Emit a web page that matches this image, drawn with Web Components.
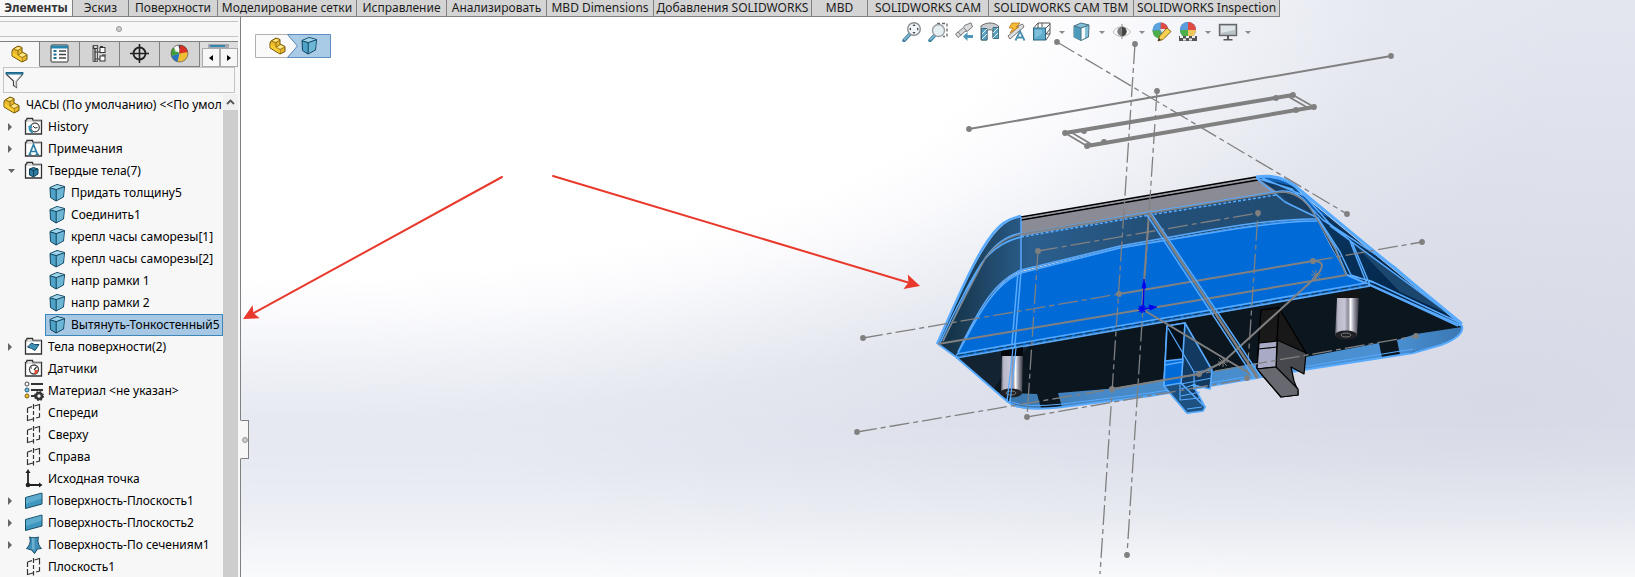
<!DOCTYPE html>
<html lang="ru">
<head>
<meta charset="utf-8">
<title>SOLIDWORKS</title>
<style>
html,body{height:100%;margin:0}
body{font:12px/16px "Noto Sans","Open Sans",sans-serif;color:#000;background:#fff;overflow:hidden}
</style>
</head>
<body>
<cad-app></cad-app>
<script>
const ICONS = {
part:`<path d="M3 5 8 2l4 1.500v4.500l5 2.500v5L12 18 2 12V7z" fill="#e9b92b" stroke="#6e5309"/><path d="M4 5.500 8 3l3.500 1L8 6z M8.500 11 12 9l4.500 2-4 2.500z" fill="#ffe886"/><path d="M8 6.500v5l4 2V18M8 6.500 4 5.500M8 6.500 12 4M8 11.500l4-3M12 13.500l5-2.500" fill="none" stroke="#7a5c0c" stroke-width=".8"/><path d="M2.500 8 8 11.500 12 14v3.500L2.500 11.800z" fill="#ffd534" opacity=".7"/>`,
cube:`<path d="M2 4.500 9 1.500l7.500 2L15.500 14 8 18 2.500 14.500z" fill="#4fa3c9" stroke="#11435c"/><path d="M2.500 4.800 9 2l7 1.800L8.200 6.500z" fill="#9fd3ea"/><path d="M8.200 6.800 16 4l-1 9.700L8.200 17.300z" fill="#6db6d6"/><path d="M2 4.800 8.200 6.600 16.500 3.700M8.200 6.600V18" fill="none" stroke="#11435c"/>`,
folder:`<path d="M1.500 17V3.500h1l.5-2h5.500l.5 2h8.500V17z" fill="#fff" stroke="#333" stroke-width="1.300"/><path d="M2 4h15" stroke="#bbb"/>`,
bars:`<rect x="1" y="1" width="17" height="17" rx="1" fill="#fff" stroke="#333"/><path d="M1 3h17" stroke="#2684ad" stroke-width="3"/><path d="M3.500 7h3M3.500 10.500h3M3.500 14h3" stroke="#1d6d92" stroke-width="2"/><path d="M9 7h7M9 10.500h7M9 14h7" stroke="#444" stroke-width="1.400"/>`,
config:`<path d="M3.500 1.500h4v3h-4zM5 5v12M5 8h5M5 15h5" fill="none" stroke="#333" stroke-width="1.200"/><path d="M3 1.500h4.500v16H3z" fill="none" stroke="#555"/><rect x="10" y="3.500" width="5" height="5" fill="#fff" stroke="#333"/><rect x="10" y="12" width="5" height="5" fill="#fff" stroke="#333"/><path d="M10 2.500h3M12 11h4" stroke="#333"/>`,
target:`<circle cx="9.500" cy="9.500" r="6" fill="none" stroke="#222" stroke-width="1.800"/><path d="M9.500 0v19M0 9.500h19" stroke="#222" stroke-width="1.600"/>`,
ball:`<circle cx="9.500" cy="9.500" r="8.500" fill="#eebd35"/><path d="M9.500 9.500 5 2.300A8.500 8.500 0 0 1 17 5.500z" fill="#3c3c3c"/><path d="M9.500 9.500 3.500 3.500a8.500 8.500 0 0 1 5-2.500z" fill="#fff"/><path d="M9.500 9.500 10 1a8.500 8.500 0 0 1 8 7z" fill="#dc2e25"/><path d="M9.500 9.500 3.500 3.500A8.500 8.500 0 0 0 1.500 12z" fill="#3e9e3c"/><path d="M9.500 9.500 1.500 12a8.500 8.500 0 0 0 6 5.800z" fill="#2774c5"/><circle cx="7" cy="5.500" r="2.500" fill="#fff" opacity=".7"/><circle cx="9.500" cy="9.500" r="8.500" fill="none" stroke="#555" stroke-width=".7"/>`,
funnel:`<path d="M1.500 2.500h16v2l-6 6.500v6.500l-3-2V11l-7-6.500z" fill="#fff" stroke="#444" stroke-width="1.200"/><path d="M1 2.500h17v1.500H1z" fill="#3e9ac0" stroke="#1b6485"/><path d="M10 11v5l1.500 1.500V11l6-6.500z" fill="#ccc"/>`,
plane:`<path d="M3.500 5 8 3.700M10.500 3l5-1.500v6M15.500 10v4l-3.500 1M9 16l-5.500 1.500V12M3.500 10V5" fill="none" stroke="#333" stroke-width="1.200"/><path d="M9.500 1v5M9.500 8v4M9.500 14v4.500" stroke="#333" stroke-width="1.200"/>`,
origin:`<path d="M4 2v14h13" fill="none" stroke="#222" stroke-width="1.800"/><path d="M4 0 1.500 4h5zM18.500 16 15 13.500v5z" fill="#222"/><circle cx="4" cy="16" r="2.300" fill="#222"/>`,
surf:`<path d="M1.500 6.500 18 2v11L1.500 17.500z" fill="#3f97c0" stroke="#174c66"/><path d="M2 7 17.500 2.500v5L2 13z" fill="#6bb5d4" opacity=".7"/>`,
loft:`<path d="M5.500 2c3 1 6 1 9 0-1 4-.5 8 3 11.500L13.500 14l-3 4.500L7.500 15 2.500 13.500C6 10 7 6 5.500 2z" fill="#3f8fb8" stroke="#174c66"/><path d="M8 3h2.500V15L8 14z" fill="#8cc6df" opacity=".6"/>`,
material:`<path d="M7 3h12M7 9h12M7 15h5" stroke="#333" stroke-width="1.800"/><circle cx="3" cy="3" r="2" fill="#fff" stroke="#444"/><circle cx="3" cy="9" r="2" fill="#6cc0e6" stroke="#275c77"/><circle cx="3" cy="15" r="2" fill="#f5c32a" stroke="#7a5c0c"/><circle cx="15" cy="15" r="3" fill="none" stroke="#333" stroke-width="2.600"/><circle cx="15" cy="15" r="4.300" fill="none" stroke="#333" stroke-width="1.400" stroke-dasharray="1.700 1.700"/>`,
zoomfit:`<path d="M8 12 2 18.500" stroke="#3f7f9f" stroke-width="3.500" stroke-linecap="round"/><path d="M8 12 2 18" stroke="#8cc4dc" stroke-width="1.500"/><circle cx="12" cy="7" r="6.300" fill="#f2f6f8" stroke="#8a8f93" stroke-width="1.400"/><path d="m12 2 1.500 2h-3zM12 12l1.500-2h-3zM7 7l2-1.500v3zM17 7l-2-1.500v3z" fill="#444"/>`,
zoomarea:`<path d="M9 1.500h10v13h-4" fill="none" stroke="#666" stroke-width="1.300" stroke-dasharray="3 2"/><path d="M7 13 2 18.500" stroke="#3f7f9f" stroke-width="3.500" stroke-linecap="round"/><path d="M7 13 2 18" stroke="#8cc4dc" stroke-width="1.500"/><circle cx="10.500" cy="8.500" r="6" fill="#e4eef3" stroke="#9a9fa3" stroke-width="1.400"/>`,
prev:`<path d="m1.500 12 8-6.500 1-2L17 .8 18.500 5l-5 4-2.500.5-7 6z" fill="#d9dadb" stroke="#77797b"/><path d="m10 6 3 3.500M4 10l3 3.500" stroke="#77797b"/><path d="M9 14.500 13.500 10v3H19v3h-5.500v3z" fill="#4f97b8"/>`,
section:`<path d="M1 4C6 0 14 0 18.500 4v12h-5.500V8.500C11.500 7.500 8.500 7.500 7 8.500V18H1z" fill="#c9cdd0" stroke="#666"/><path d="M1.500 6.500H7V18H1.500zM13 5.500h5.500v11H13z" fill="#5ca2c2" stroke="#3e6c82"/><path d="m2 12 5-5M2 17l5-5M13 11l5-5M13 16l5-5" stroke="#e8f6fb"/>`,
dynamic:`<path d="m2 14 8-7 2-3 4.500-2L18 5l-6 5-8 7z" fill="#ddd" stroke="#777"/><path d="M6 1h8L10 5h3l-9 6 3-5H3z" fill="#f7bc36" stroke="#b97a16" stroke-width=".8"/><path d="M9.500 18.500 14 9l4.500 9.500M11 15.500h6" fill="none" stroke="#4b8fb0" stroke-width="1.800"/>`,
orient:`<path d="m2 5.500 4-4.500h12v11l-4 6M6 1v11h12M10 5V1M14 6l4-4M14 12l4-5" fill="none" stroke="#555"/><rect x="1.500" y="6" width="12" height="12" fill="#5faccd" stroke="#2d627b"/><path d="M3 8h7v4L3 16z" fill="#93cbe2" opacity=".6"/>`,
display:`<path d="m2 4 7-3 8 2-.5 12L9 18.500 2 15z" fill="#82bfd9" stroke="#49707f"/><path d="m2 4 7 2v12L2 15z" fill="#4d9bbd"/><path d="m9 6 4-1v11l-4 2z" fill="#f5fafc"/><path d="m2 4 7 2 8-3M9 6v12" fill="none" stroke="#49707f"/>`,
eye:`<path d="M1 10C5 3 14 3 18.500 10 14 16 5 16 1 10z" fill="#fafafa" stroke="#bbb"/><circle cx="10" cy="9.500" r="4.700" fill="#7b7b7b"/><path d="M10 2v15" stroke="#888"/><circle cx="11.500" cy="8" r="1.800" fill="#eee"/><path d="M10 5a4.500 4.500 0 0 1 0 9z" fill="#444"/>`,
apper:`<circle cx="8.500" cy="8.500" r="8" fill="#4589d2"/><path d="M8.500 8.500V.5a8 8 0 0 1 8 8z" fill="#df4a43"/><path d="M8.500 8.500H.5A8 8 0 0 1 8.500.5z" fill="#5ba3dc"/><path d="M8.500 8.500H.5a8 8 0 0 0 8 8z" fill="#4eae4a"/><path d="M8 7h6l-3 6z" fill="#d8e8ee"/><path d="m6 19 1.500-5L15 6l4 3.500-8 8z" fill="#f7cf52" stroke="#85651a"/><path d="m6 19 1-3 2 2z" fill="#333"/>`,
scene:`<circle cx="10" cy="8" r="8" fill="#4589d2"/><path d="M10 8V0a8 8 0 0 1 8 8z" fill="#df4a43"/><path d="M10 8h8a8 8 0 0 1-8 8z" fill="#f1c65a"/><path d="M10 8v8a8 8 0 0 1-8-8z" fill="#4eae4a"/><path d="M10 8H2a8 8 0 0 1 8-8z" fill="#5b9cdc"/><path d="M1 14h18v5H1z" fill="#555"/><path d="M2 14h3v2H2zM8 14h3v2H8zM14 14h3v2h-3zM5 16.500h3v2H5zM11 16.500h3v2h-3z" fill="#eee"/>`,
monitor:`<rect x="1.500" y="2.500" width="17" height="11" fill="#b9c2c9" stroke="#666" stroke-width="1.400"/><path d="M3 4h14v4L3 11z" fill="#dfe5e9"/><path d="M9 14h2v3h3.500v1.500h-9V17H9z" fill="#555"/>`
};
ICONS.history = ICONS.folder+`<circle cx="11" cy="10.500" r="4.300" fill="#fff" stroke="#444" stroke-width="1.200"/><path d="M9 9l2 2 2.500-.5" fill="none" stroke="#333"/><path d="M9 15.500c-3-.5-4-3-3-6" fill="none" stroke="#3491bb" stroke-width="2"/><path d="m3.500 10 3.500-2.500L8.500 11z" fill="#3491bb"/>`;
ICONS.notes = ICONS.folder+`<path d="m5.500 15.500 4-10 4 10M7 12.500h5M4.500 15.500h3M11.500 15.500h3.500" fill="none" stroke="#2e7fa4" stroke-width="1.700"/>`;
ICONS.solids = ICONS.folder+`<path d="m5.500 8 4-1.500L14 8v5l-4.500 3-4-2z" fill="#2c7da3" stroke="#123f55"/><path d="m5.500 8 4 1.500L14 8M9.500 9.500V15" stroke="#123f55" fill="none"/>`;
ICONS.surfaces = ICONS.folder+`<path d="m3.500 10 4-4 3 1.500L15 7.500l-4 6-3.500-2z" fill="#3f8fb8" stroke="#174c66"/>`;
ICONS.sensors = ICONS.folder+`<circle cx="10" cy="10.500" r="4.500" fill="#fff" stroke="#444" stroke-width="1.300"/><path d="m10 11 2.500-3M7 9h1" stroke="#333" stroke-width="1.200"/><path d="M10 15a4 4 0 0 0 4-4h-3z" fill="#e04b2d"/>`;

const define = (name, html) => customElements.define(name, class extends HTMLElement {
  connectedCallback() {
    if (this.shadowRoot) return;
    const t = document.createElement('template');
    t.innerHTML = typeof html === 'function' ? html(this) : html;
    this.attachShadow({mode:'open'}).append(t.content);
  }
});
const BTN = `button{all:unset;box-sizing:border-box;cursor:default}`;

define('cad-icon', el => `<style>:host{display:block;width:20px;height:20px;flex:none}svg{display:block;width:100%;height:100%}</style>
<svg viewBox="0 0 20 20" aria-hidden="true">${ICONS[el.getAttribute('name')]}</svg>`);

define('command-tab', el => `<style>
:host{display:block;box-sizing:border-box;height:17px;border-right:1px solid #808080;border-bottom:1px solid #808080;background:#d4d4d4;color:#1c1c1c}
:host([selected]){background:#f7f7f7;font-weight:bold;color:#333}
${BTN}button{display:block;width:100%;height:16px;line-height:10px;text-align:center;white-space:nowrap}
</style><button role="tab" type="button"><slot></slot></button>`);

define('command-tabs', `<style>
:host{display:flex;width:max-content}
command-tab{width:var(--w)}
</style>` + [['Элементы',73],['Эскиз',56],['Поверхности',89],['Моделирование сетки',139],['Исправление',90],['Анализировать',100],['MBD Dimensions',107],['Добавления SOLIDWORKS',158],['MBD',56],['SOLIDWORKS CAM',121],['SOLIDWORKS CAM TBM',145],['SOLIDWORKS Inspection',146]]
 .map(([t,w],i)=>`<command-tab style="--w:${w}px" ${i?'':'selected'}>${t}</command-tab>`).join(''));

define('tree-row', el => {
  const open = el.getAttribute('arrow');
  const lvl = el.getAttribute('level');
  return `<style>
:host{display:block;height:22px}
div{display:flex;align-items:center;height:22px;padding-left:${lvl==='0'?2:lvl==='1'?8:45}px;white-space:nowrap}
.arrow{width:16px;height:12px;flex:none}
.arrow svg{display:block}
.label{display:flex;align-items:center;box-sizing:border-box;height:22px;padding:0 2px;border:1px solid transparent;gap:3px}
:host(:not([level="2"])) .label{padding-left:0;border:0;gap:4px}
:host([selected]) .label{background:#a6c8e4;border-color:#3c86b8}
</style><div>${lvl==='1'?`<span class="arrow">${open==='open'?'<svg width="8" height="12"><path d="M0 4h7L3.500 8z" fill="#666"/></svg>':open?'<svg width="8" height="12"><path d="M0 2v8l4-4z" fill="#666"/></svg>':''}</span>`:''}
<span class="label"><cad-icon name="${el.getAttribute('icon')}"></cad-icon><slot></slot></span></div>`;
});

const ROWS = [[0,'part','ЧАСЫ (По умолчанию) &lt;&lt;По умол'],[1,'history','History','closed'],[1,'notes','Примечания','closed'],[1,'solids','Твердые тела(7)','open'],
[2,'cube','Придать толщину5'],[2,'cube','Соединить1'],[2,'cube','крепл часы саморезы[1]'],[2,'cube','крепл часы саморезы[2]'],[2,'cube','напр рамки 1'],[2,'cube','напр рамки 2'],[2,'cube','Вытянуть-Тонкостенный5','',1],
[1,'surfaces','Тела поверхности(2)','closed'],[1,'sensors','Датчики'],[1,'material','Материал &lt;не указан&gt;'],[1,'plane','Спереди'],[1,'plane','Сверху'],[1,'plane','Справа'],[1,'origin','Исходная точка'],[1,'surf','Поверхность-Плоскость1','closed'],[1,'surf','Поверхность-Плоскость2','closed'],[1,'loft','Поверхность-По сечениям1','closed'],[1,'plane','Плоскость1']];

define('feature-tree', `<style>
:host{display:grid;grid-template-columns:1fr 15px;min-height:0;overflow:hidden}
.rows{overflow:hidden;min-width:0}
.scroll{background:#cdcdcd;display:flex;flex-direction:column}
${BTN}button{height:16px;background:#f0f0f0;display:grid;place-items:center}
</style><div class="rows" role="tree">${ROWS.map(([l,i,t,a,s])=>`<tree-row role="treeitem" level="${l}" icon="${i}" ${a?`arrow="${a}"`:''} ${s?'selected':''}>${t}</tree-row>`).join('')}</div>
<div class="scroll"><button type="button" aria-label="Прокрутить вверх"><svg width="9" height="6"><path d="m1 5 3.500-3.500L8 5" fill="none" stroke="#555" stroke-width="1.800"/></svg></button></div>`);

define('feature-panel', `<style>
:host{display:grid;grid-template-rows:auto auto auto 1fr;box-sizing:border-box;width:241px;background:#f7f7f7;border-right:1px solid #808080;padding-right:2px;min-height:0}
.grip{height:14px;margin-top:4px;border:1px solid #c4c4c4;border-width:1px 0;display:grid;place-items:center;box-sizing:content-box}
.grip i{width:4px;height:4px;border:1px solid #999;border-radius:50%;background:#ccc}
.tabs{display:flex;margin-top:4px;height:26px;box-sizing:border-box;border-top:1px solid #808080;background:#d4d4d4;overflow:hidden}
${BTN}
.tabs>button{width:40px;display:grid;place-items:center;border-right:1px solid #808080;border-bottom:1px solid #808080}
.tabs>button.on{background:#f7f7f7;border-bottom-color:#f7f7f7}
.nav{flex:1;display:flex;align-items:flex-end;padding-left:2px;background:linear-gradient(90deg,transparent 10px,#3187ad 10px 25px,transparent 25px) 0 3px/100% 2px no-repeat,linear-gradient(90deg,transparent 8px,#a8a8b0 8px 29px,transparent 29px) 0 2px/100% 4px no-repeat,#ddd}
.nav button{flex:1;height:19px;border:1px solid #aaa;background:#f7f7f7;display:grid;place-items:center}
label{display:flex;align-items:center;margin:0 3px 1px;height:26px;box-sizing:border-box;border:1px solid #c4c4c4;padding-left:1px}
input{flex:1;min-width:0;border:0;outline:0;background:transparent;font:inherit;height:20px;padding:0 4px}
</style>
<div class="grip"><i></i></div>
<div class="tabs">${['part','bars','config','target','ball'].map((n,i)=>`<button type="button" class="${i?'':'on'}" aria-label="${['Дерево конструирования','Свойства','Конфигурации','Размеры','Отображение'][i]}"><cad-icon name="${n}"></cad-icon></button>`).join('')}
<div class="nav"><button type="button" aria-label="Назад"><svg width="4" height="6"><path d="M4 0v6L0 3z"/></svg></button><button type="button" aria-label="Вперед"><svg width="4" height="6"><path d="M0 0v6l4-3z"/></svg></button></div></div>
<label><cad-icon name="funnel"></cad-icon><input type="text" aria-label="Фильтр"></label>
<feature-tree></feature-tree>`);

define('panel-handle', `<style>
:host{display:block}${BTN}
button{width:9px;height:39px;border:1px solid #808080;border-left-color:#f7f7f7;background:#f7f7f7;display:grid;place-items:center}
i{width:4px;height:4px;border:1px solid #999;border-radius:50%;background:#ccc}
</style><button type="button" aria-label="Скрыть панель"><i></i></button>`);

define('model-breadcrumb', `<style>
:host{display:block;width:76px;height:24px}
nav{display:grid;height:24px}
svg,span{grid-area:1/1}
span{display:flex;align-items:center;gap:12px;padding-left:13px}
a{display:block}
</style><nav><svg width="76" height="24"><path d="M.5.500h32l10 11.500-10 11.500H.5z" fill="#fafafa" stroke="#b0b0b0"/><path d="M32.500.5h43v23h-43l10-11.500z" fill="#a9cbe6" stroke="#5c8fc0"/></svg>
<span><a href="#part" aria-label="Деталь"><cad-icon name="part"></cad-icon></a><a href="#body" aria-label="Твердое тело"><cad-icon name="cube"></cad-icon></a></span></nav>`);

define('view-toolbar', `<style>
:host{display:flex;gap:6px;align-items:center;height:20px}
${BTN}button{width:20px;height:20px}
.drop{width:8px;display:grid;place-items:center}
</style>` + [['zoomfit','Во весь экран'],['zoomarea','Увеличить область'],['prev','Предыдущий вид'],['section','Разрез'],['dynamic','Примечания'],['orient','Ориентация',1],['display','Стиль отображения',1],['eye','Скрыть',1],['apper','Внешний вид'],['scene','Сцена',1],['monitor','Настройки вида',1]]
.map(([n,t,d])=>`<button type="button" aria-label="${t}"><cad-icon name="${n}"></cad-icon></button>${d?`<button type="button" class="drop" aria-label="${t}: меню"><svg width="6" height="3"><path d="M0 0h6L3 3z" fill="#8a8a8a"/></svg></button>`:''}`).join(''));

const dots = pts => pts.map(([x,y])=>`<circle cx="${x}" cy="${y}" r="2.900"/>`).join('');
const star = (x,y,r=5) => `<path d="M${x-r} ${y}h${2*r}M${x} ${y-r}v${2*r}M${x-r+1} ${y-r+1}l${2*r-2} ${2*r-2}M${x+r-1} ${y-r+1}l${2-2*r} ${2*r-2}"/>`;
const arrow = (x1,y1,x2,y2) => {
  const a=Math.atan2(y2-y1,x2-x1)*180/Math.PI;
  return `<path d="M${x1} ${y1}L${x2-8*Math.cos(a*Math.PI/180)} ${y2-8*Math.sin(a*Math.PI/180)}" stroke="#e8392c" stroke-width="2" stroke-linecap="round"/><path d="M0 0-15-7.500-12 0-15 7.500z" fill="#e8392c" transform="translate(${x2} ${y2}) rotate(${a})"/>`;
};
const BOTTOM='L1462 326C1464 333 1455 340 1441 345L1413 353 1303 370 1210 386 1150 396 1063 407Q1020 412 1008 402';
define('model-view', `<style>:host{display:block;min-height:0;min-width:0}svg{display:block;width:100%;height:100%}</style>
<svg viewBox="0 0 1635 577" role="img" aria-label="Модель корпуса часов">
<defs>
<linearGradient id="steel" x1="950" x2="1320" y1="0" y2="0" gradientUnits="userSpaceOnUse"><stop offset="0" stop-color="#163449"/><stop offset=".22" stop-color="#2b5f8e"/><stop offset=".5" stop-color="#24517a"/><stop offset="1" stop-color="#214b70"/></linearGradient>
<linearGradient id="side" x1="1330" x2="1420" y1="210" y2="310" gradientUnits="userSpaceOnUse"><stop offset="0" stop-color="#0a365f"/><stop offset="1" stop-color="#032448"/></linearGradient>
<linearGradient id="cyl"><stop offset="0" stop-color="#55565f"/><stop offset=".12" stop-color="#b8b8c8"/><stop offset=".4" stop-color="#c5c5d6"/><stop offset=".55" stop-color="#8a8a98"/><stop offset=".65" stop-color="#fff"/><stop offset=".78" stop-color="#a0a0ae"/><stop offset="1" stop-color="#33343a"/></linearGradient>
<linearGradient id="rim" x1="1010" x2="1460" y1="0" y2="0" gradientUnits="userSpaceOnUse"><stop offset="0" stop-color="#3b76ad"/><stop offset=".2" stop-color="#4789c6"/><stop offset=".85" stop-color="#4b91d3"/><stop offset="1" stop-color="#3a78b3"/></linearGradient>
</defs>
<path d="M1021 217 1256 177 1281 191 1021 236z" fill="#8b8b95"/>
<path d="M1021 217 1256 177M1021 220 1258 180" stroke="#000" stroke-width="1.600"/><path d="M1021 218.500 1257 178.500" stroke="#9c9caa"/>
<path d="M956 357 1370 285${BOTTOM}z" fill="#0b161f"/>
<path d="M956 357 994 389 1001 378 1030 345z" fill="#142331"/>
<path d="M1008 402 1013 393 1037 394 1041 408Q1015 411 1008 402z" fill="url(#rim)"/>
<path d="M1058 393 1107 389 1160 381 1257 363 1306 357 1379 343 1382 358 1303 370 1210 386 1150 396 1062 407z" fill="url(#rim)"/>
<path d="M1397 340 1416 334 1462 327C1464 333 1455 340 1441 345L1400 355z" fill="url(#rim)"/>
<path d="M938 344C955 306 968 274 984 249S1008 220 1021 217V236L1281 191C1300 192 1308 208 1317 220Q1280 219 1210 232L1120 247 1021 271C997 281 982 307 956 357z" fill="url(#steel)"/>
<path d="M956 357C982 307 997 281 1021 272L1120 247 1210 232Q1280 219 1317 220L1330 245 1347 275 1370 285z" fill="#006bd6"/>
<path d="M1256 177C1275 174 1290 181 1301 194L1462 326 1370 285 1347 275 1317 220z" fill="url(#side)"/>
<path d="M1256 177C1275 174 1290 180 1301 194L1330 218 1316 212 1292 186z" fill="#0f63b8"/>
<path d="M1270 184 1292 190 1315 216 1290 204z" fill="#193e60"/>
<path d="M1352 242 1415 289 1452 316 1400 292z" fill="#1b466e"/>
<g fill="none" stroke="#58aaff" stroke-width="1.500" stroke-linejoin="round">
<path d="M937 344C955 305 967 274 983 248S1008 219 1021 216" stroke-width="2.500"/>
<path d="M943 341C960 306 970 283 986 257Q1001 236 1022 233M939 345C956 307 975 272 984 260Q1000 241 1022 237"/>
<path d="M1021 217V272L1010 403M1018 272 1007 402"/>
<path d="M956 357C982 307 996 283 1021 273L1120 248 1210 233Q1280 221 1317 221M958 352C982 302 996 281 1021 270L1120 246 1210 230Q1280 218 1317 219"/>
<path d="M1021 234 1150 212 1281 191Q1300 190 1312 210L1335 247 1347 275"/>
<path d="M1021 237 1150 215 1276 195" stroke-dasharray="3 2"/>
<path d="M938 344 956 357 1008 402Q1020 412 1063 407L1150 396 1210 386 1303 370 1413 353 1441 345C1455 340 1464 333 1462 326L1370 285 1347 275" stroke-width="2"/>
<path d="M1012 402Q1025 408 1063 404L1150 393 1210 383 1303 367 1413 349" stroke-width="1"/>
<path d="M956 358 1370 286M957 354 1366 283" stroke-width="1.700"/>
<path d="M1256 177C1275 174 1290 180 1301 191L1462 324" stroke-width="3"/>
<path d="M1256 178 1292 189 1323 220 1395 267 1458 322 1371 281 1347 275M1256 178 1285 202 1318 218 1340 252 1351 275 1375 283M1262 178 1305 196 1329 223 1352 242 1440 307M1330 226 1352 242 1370 285M1350 241 1367 284M1370 285 1458 326" />
</g>
<path d="M957 355.500 1368 284.500" stroke="#163956" stroke-width="1" stroke-dasharray="7 3"/>
<g>
<path d="M1001 351 1023 347V357H1001z" fill="#05080b"/><path d="M1002 356h21l-1 37h-21z" fill="url(#cyl)"/><ellipse cx="1011" cy="393" rx="11" ry="4.500" fill="#202126"/><ellipse cx="1011" cy="393" rx="5" ry="2" fill="none" stroke="#777"/>
<path d="M1337 294 1359 290V299H1337z" fill="#151515"/><path d="M1337 298h22l-2 38h-22z" fill="url(#cyl)"/><ellipse cx="1346" cy="335" rx="11" ry="4.500" fill="#202126"/><ellipse cx="1346" cy="335" rx="5" ry="2" fill="none" stroke="#777"/>
<path d="M1016 348 1010 403M1013 348 1007 402" stroke="#58aaff" stroke-width="1.200" fill="none"/>
</g>
<g stroke="#000" stroke-width="1.200" stroke-linejoin="round">
<path d="M1261 310 1279 308 1306 353 1304 374 1291 367 1294 381 1298 391V395L1281 397 1257 369z" fill="#47484e"/>
<path d="M1261 310 1279 308 1276 367 1257 369z" fill="#191919"/><path d="M1279 308 1306 353 1277 340z" fill="#181818"/>
<path d="M1259 343 1277 341 1276 367 1257 369z" fill="#a8aac6"/><path d="M1258 349 1277 347"/>
<path d="M1257 369 1276 367 1298 389V395L1281 397z" fill="#686970"/>
</g>
<g stroke="#58aaff" stroke-width="1.600" stroke-linejoin="round">
<path d="M1167 326 1185 323 1212 370 1210 389 1193 385 1205 407 1203 411 1187 413 1164 386z" fill="#123a60"/>
<path d="M1167 326 1185 323 1181 384 1164 386z" fill="#04101b"/><path d="M1165 361 1183 359 1181 384 1164 386z" fill="#006bd6"/><path d="M1165 365 1182 362"/>
<path d="M1164 386 1181 383 1205 407 1203 411 1187 413z" fill="#1d5180"/><path d="M1168 328 1194 372V390M1194 372 1212 370M1181 384 1212 378M1181 396 1200 392M1180 384V400L1200 398M1187 409 1202 407M1181 389 1196 384" fill="none" stroke-width="1.200"/>
</g>
<g fill="none" stroke="#808080" stroke-width="1.300" stroke-dasharray="20 4 5 4">
<path d="M1057 42 1347 214M1135 44 1100 574M1157 91 1127 555M863 338 1119 294M1313 261 1422 242M857 432 1112 389 1416 336M1038 251 1258 213 1247 378M1038 251 1027 417 1247 379"/>
</g>
<g fill="none" stroke="#808080" stroke-width="2">
<path d="M969 129 1391 56M1119 294 1313 261Q1326 261 1320 271L1316 277 1223 362 1213 367 1199 374 1112 389M938 344 1347 275M1149 213 1142 309 1257 378"/>
<path d="M943 341C960 306 974 280 986 257Q1001 238 1022 234L1150 213 1281 192Q1300 192 1312 211L1335 249 1346 275" stroke-width="1.300"/>
<path d="M1065 133 1293 95M1314 107 1087 146" stroke-width="4"/><path d="M1065 133 1087 146M1069 131 1091 144M1293 95 1314 107M1289 97 1310 109" stroke-width="1.700"/>
</g>
<path d="M1147 215 1255 379M1151 213 1261 377" stroke="#58aaff" stroke-width="1.500"/><path d="M1149 213 1258 378" stroke="#808080" stroke-width="2.500"/>
<g fill="#808080">${dots([[969,129],[1391,56],[1057,42],[1347,214],[1135,44],[1157,91],[1127,555],[863,338],[1119,294],[1313,261],[1422,242],[857,432],[1112,389],[1199,374],[1416,336],[1038,251],[1258,213],[1247,378],[1027,417],[1065,133],[1293,95],[1314,107],[1087,146],[1084,131],[1276,98],[1296,110],[1104,142]])}</g>
<g stroke="#808080">${star(1316,275)}${star(1223,362)}</g>
<g stroke="#0000ee" stroke-width="1.500" fill="#0000ee">${star(1142,309,4)}<path d="M1143 309 1144 287M1142 309 1150 308"/><path d="M1144 279 1146 288H1142zM1157 307 1149 305 1150 310z" stroke-width=".7"/></g>
${arrow(502,177,243,319)}${arrow(553,176,920,286)}
</svg>`);

define('cad-app', `<style>
:host{display:grid;height:100vh;grid-template:17px minmax(0,1fr)/241px minmax(0,1fr);
background:linear-gradient(180deg,transparent 420px,rgba(255,255,255,.08) 460px,rgba(255,255,255,.35) 520px,rgba(255,255,255,.8) 577px),
radial-gradient(ellipse 1130px 418px at 300px 16px,#fff 62%,rgba(252,252,254,.9) 72%,rgba(246,247,250,.6) 84%,rgba(236,238,243,.3) 96%,rgba(228,231,240,0) 112%),
radial-gradient(ellipse 1000px 420px at 1500px 400px,#d7dae6,#dee1eb 55%,#e4e7f0)}
model-view{grid-area:1/1/3/3}
command-tabs{grid-area:1/1/2/3;z-index:1}
feature-panel{grid-area:2/1;z-index:1}
.overlay{grid-area:2/2;z-index:1;display:flex;align-items:flex-start;pointer-events:none}
model-breadcrumb{margin:17px 0 0 14px}
view-toolbar{margin:5px 0 0 571px}
panel-handle{grid-area:2/2;z-index:1;justify-self:start;margin-top:403px;margin-left:-1px}
</style>
<model-view></model-view><command-tabs role="tablist"></command-tabs><feature-panel></feature-panel>
<div class="overlay"><model-breadcrumb></model-breadcrumb><view-toolbar role="toolbar"></view-toolbar></div><panel-handle></panel-handle>`);
</script>
</body>
</html></script>
